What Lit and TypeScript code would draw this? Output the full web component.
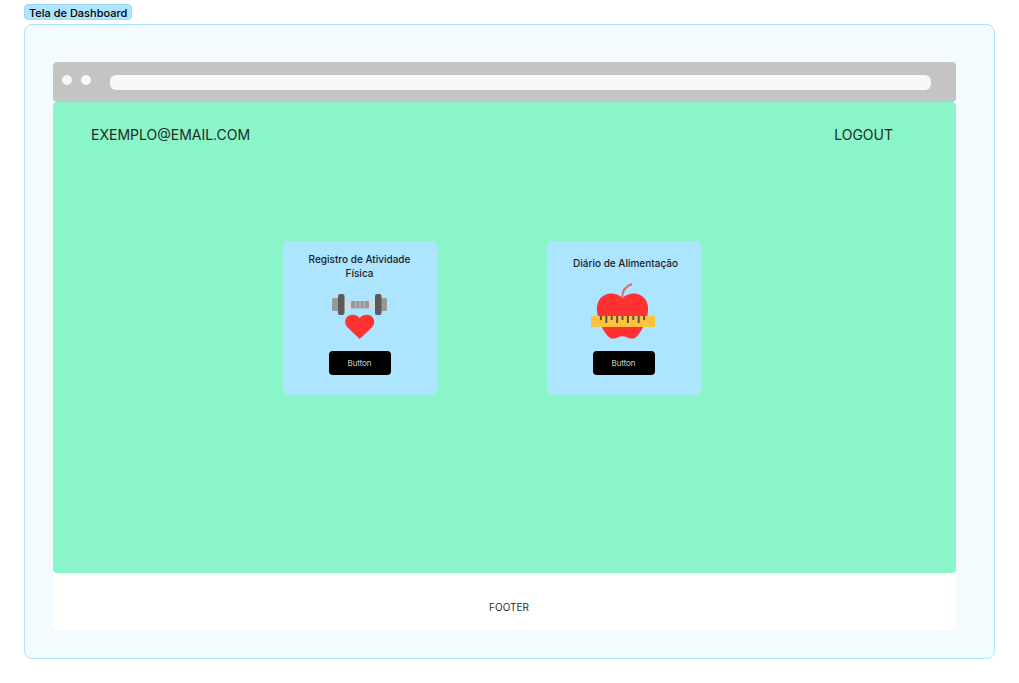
import { LitElement, html, css, svg } from "lit";
import { customElement, property } from "lit/decorators.js";

const dumbbellHeart = html`<svg class="icon" viewBox="0 0 70 60" aria-hidden="true">
  <rect x="6" y="17" width="58" height="5" rx="2" fill="#d9d9d9" />
  <rect x="7" y="13" width="8" height="13" rx="1.5" fill="#999" />
  <rect x="54" y="13" width="8" height="13" rx="1.5" fill="#999" />
  <rect x="13" y="9" width="6.5" height="21" rx="2" fill="#5b5b5b" />
  <rect x="50" y="9" width="6.5" height="21" rx="2" fill="#5b5b5b" />
  <rect x="26" y="16" width="18" height="7.4" fill="#999" />
  <path d="M30.6 16v7.4M35 16v7.4M39.4 16v7.4" stroke="#c0c4c7" stroke-width=".8" />
  <path
    d="M34.700 54 22.600 42.400C20.900 40.700 20.200 39 20.200 37c0-4.200 3.200-7.200 7.200-7.200 3 0 5.600 1 7.300 3.200 1.700-2.200 4.300-3.200 7.300-3.200 4 0 7.200 3 7.200 7.200 0 2-.7 3.700-2.400 5.400z"
    fill="#ff3131"
  />
</svg>`;

const marks = [0, 1, 2, 3, 4, 5, 6, 7, 8];

const appleRuler = html`<svg class="icon" viewBox="2 0 70 60" aria-hidden="true">
  <path
    d="M35.500 13C32.500 10 28.500 8.500 24 8.500 16 8.500 9.900 15 9.900 23.500 9.900 34 15.500 45 20.500 50.700c2.400 3 5.500 3.300 8.800 2.300 2.200-.7 3.400-1.700 6.200-1.700s4 1 6.200 1.700c3.300 1 6.400.7 8.800-2.300C55.500 45 61.100 34 61.100 23.500 61.100 15 55 8.500 47 8.500c-4.500 0-8.500 1.500-11.500 4.500z"
    fill="#ff3131"
  />
  <path d="M35.200 13.500C35 6 38.500 1 45 -1" fill="none" stroke="#d0706f" stroke-width="2" />
  <rect x="4" y="31" width="64" height="11" fill="#ffc23f" />
  ${marks.map(
    (i) => svg`<rect x=${12.9 + i * 5.4} y="31" width="2" height=${i % 2 ? 7 : 4} fill="#5b5347" />`
  )}
</svg>`;

@customElement("dashboard-card")
class DashboardCard extends LitElement {
  @property() heading = "";
  @property({ attribute: false }) icon: unknown = null;

  static styles = css`
    :host {
      display: flex;
      flex-direction: column;
      align-items: center;
      box-sizing: border-box;
      width: 154px;
      padding: 11px 0 20px;
      border-radius: 5px;
      background: #ade4ff;
    }
    .heading {
      display: flex;
      align-items: center;
      justify-content: center;
      box-sizing: border-box;
      width: 100%;
      min-height: 28px;
      margin: 0;
      padding: 0 24px;
      font: 500 10px/14px Inter, sans-serif;
      color: #1a2226;
      text-align: center;
    }
    .heading.single {
      min-height: 22px;
      margin-bottom: 6px;
      padding: 0 0 0 4px;
    }
    .icon {
      display: block;
      width: 70px;
      height: 60px;
      margin: 5px 0 6px;
      overflow: visible;
    }
    .action {
      width: 62px;
      height: 24px;
      padding: 0;
      border: 0;
      border-radius: 4px;
      background: #000;
      color: #fff;
      font: 300 8px/12px Inter, sans-serif;
      cursor: pointer;
    }
  `;

  render() {
    const single = this.heading.length < 22;
    return html`
      <h2 class="heading ${single ? "single" : ""}">${this.heading}</h2>
      ${this.icon}
      <button class="action" type="button">Button</button>
    `;
  }
}

@customElement("app-root")
class AppRoot extends LitElement {
  static styles = css`
    :host {
      display: flex;
      flex-direction: column;
      align-items: stretch;
      box-sizing: border-box;
      min-height: 100vh;
      padding: 4px 24px 24px;
      background: #fff;
      font-family: Inter, sans-serif;
      color: #232b28;
    }
    .label {
      align-self: flex-start;
      box-sizing: border-box;
      margin: 0 0 4px;
      padding: 2px 4px 0;
      border: 1px solid #9edaf7;
      border-radius: 4px;
      background: #ade4ff;
      color: #000;
      font-size: 11px;
      font-weight: 500;
      line-height: 12px;
    }
    .board {
      display: flex;
      flex: 1;
      flex-direction: column;
      padding: 37px 38px 28px 28px;
      border: 1px solid #ade4ff;
      border-radius: 8px;
      background: #f3fbff;
    }
    .window {
      display: flex;
      flex: 1;
      flex-direction: column;
      border-radius: 4px;
      background: #fff;
    }
    .bar {
      display: flex;
      gap: 9px;
      padding: 13px 25px 12px 9px;
      border-radius: 4px;
      background: #c4c4c4;
    }
    .dot {
      width: 10px;
      height: 10px;
      border-radius: 50%;
      background: #f8f8f8;
    }
    .address {
      flex: 1;
      height: 15px;
      margin-left: 10px;
      border-radius: 6px;
      background: #f8f8f8;
    }
    .screen {
      flex: 1;
      border-radius: 4px;
      background: #8af5c8;
    }
    .top {
      display: flex;
      justify-content: space-between;
      padding: 23px 63px 0 38px;
      font-size: 14px;
      line-height: 20px;
    }
    .logout {
      color: inherit;
      text-decoration: none;
    }
    .cards {
      display: flex;
      justify-content: center;
      gap: 110px;
      padding: 96px 26px 0 0;
    }
    .footer {
      padding: 28px 0 17px 9px;
      font-size: 10px;
      line-height: 12px;
      text-align: center;
    }
  `;

  render() {
    return html`
      <h1 class="label">Tela de Dashboard</h1>
      <section class="board">
        <div class="window">
          <div class="bar">
            <span class="dot"></span><span class="dot"></span><span class="address"></span>
          </div>
          <main class="screen">
            <header class="top">
              <span>EXEMPLO@EMAIL.COM</span>
              <a class="logout" href="#">LOGOUT</a>
            </header>
            <div class="cards">
              <dashboard-card heading="Registro de Atividade Física" .icon=${dumbbellHeart}></dashboard-card>
              <dashboard-card heading="Diário de Alimentação" .icon=${appleRuler}></dashboard-card>
            </div>
          </main>
          <footer class="footer">FOOTER</footer>
        </div>
      </section>
    `;
  }
}
